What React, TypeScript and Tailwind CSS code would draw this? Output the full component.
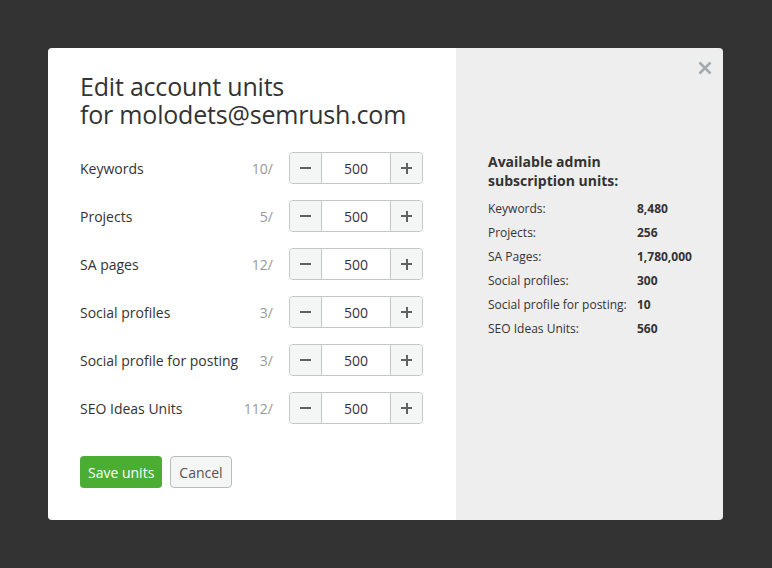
import { useState } from "react";

const units = [
  { label: "Keywords", used: "10/" },
  { label: "Projects", used: "5/" },
  { label: "SA pages", used: "12/" },
  { label: "Social profiles", used: "3/" },
  { label: "Social profile for posting", used: "3/" },
  { label: "SEO Ideas Units", used: "112/" },
];

const available = [
  { label: "Keywords:", value: "8,480" },
  { label: "Projects:", value: "256" },
  { label: "SA Pages:", value: "1,780,000" },
  { label: "Social profiles:", value: "300" },
  { label: "Social profile for posting:", value: "10" },
  { label: "SEO Ideas Units:", value: "560" },
];

function Stepper() {
  const [value, setValue] = useState(500);

  return (
    <div className="flex h-8 w-[134px] overflow-hidden rounded-[4px] border border-[#c4c7c8]">
      <button
        type="button"
        onClick={() => setValue((v) => Math.max(0, v - 1))}
        className="flex w-8 items-center justify-center border-r border-[#c4c7c8] bg-[#f4f5f5]"
      >
        <span className="block h-[2px] w-[11px] bg-[#5f6162]" />
      </button>
      <input
        value={value}
        onChange={(event) => setValue(Number(event.target.value) || 0)}
        className="w-0 flex-1 bg-white text-center text-[14px] text-[#333] outline-none"
      />
      <button
        type="button"
        onClick={() => setValue((v) => v + 1)}
        className="relative flex w-8 items-center justify-center border-l border-[#c4c7c8] bg-[#f4f5f5]"
      >
        <span className="block h-[2px] w-[11px] bg-[#5f6162]" />
        <span className="absolute h-[11px] w-[2px] bg-[#5f6162]" />
      </button>
    </div>
  );
}

export default function App() {
  return (
    <div
      className="flex min-h-[568px] items-start bg-[#333333] pt-12 pl-12"
      style={{ fontFamily: '"Open Sans", "Noto Sans", sans-serif' }}
    >
      <div className="flex h-[472px] w-[675px] shrink-0 overflow-hidden rounded-[4px]">
        <div className="flex w-[408px] shrink-0 flex-col bg-white pt-[24px] pr-[33px] pl-8">
          <h1 className="text-[25px] leading-[28px] font-medium tracking-[-0.2px] text-[#333]">
            Edit account units
            <br />
            for molodets@semrush.com
          </h1>

          <div className="mt-[24px] flex flex-col gap-4">
            {units.map((unit) => (
              <div key={unit.label} className="flex h-8 items-center">
                <span className="flex-1 text-[14px] text-[#333]">{unit.label}</span>
                <span className="mr-[16px] text-[14px] text-[#999]">{unit.used}</span>
                <Stepper />
              </div>
            ))}
          </div>

          <div className="mt-[32px] flex gap-2">
            <button
              type="button"
              className="h-8 rounded-[4px] bg-[#4bae32] px-[8px] text-[14px] text-white"
            >
              Save units
            </button>
            <button
              type="button"
              className="h-8 rounded-[4px] border border-[#b9bcbd] bg-[#f4f5f5] px-[8px] text-[14px] text-[#555]"
            >
              Cancel
            </button>
          </div>
        </div>

        <div className="relative flex-1 bg-[#eeeeee] px-8 pt-[104px]">
          <button
            type="button"
            className="absolute top-[8px] right-[7px] flex h-6 w-6 items-center justify-center"
          >
            <svg width="14" height="14" viewBox="0 0 14 14">
              <path
                d="M1.5 1.5 L12.5 12.5 M12.5 1.5 L1.5 12.5"
                stroke="#a3abb0"
                strokeWidth="2.6"
              />
            </svg>
          </button>

          <h2 className="text-[14px] leading-[19px] font-bold text-[#333]">
            Available admin
            <br />
            subscription units:
          </h2>

          <div className="mt-[7px] flex flex-col">
            {available.map((item) => (
              <div key={item.label} className="flex h-6 items-center text-[12px] text-[#333]">
                <span className="w-[149px]">{item.label}</span>
                <span className="font-bold">{item.value}</span>
              </div>
            ))}
          </div>
        </div>
      </div>
    </div>
  );
}
